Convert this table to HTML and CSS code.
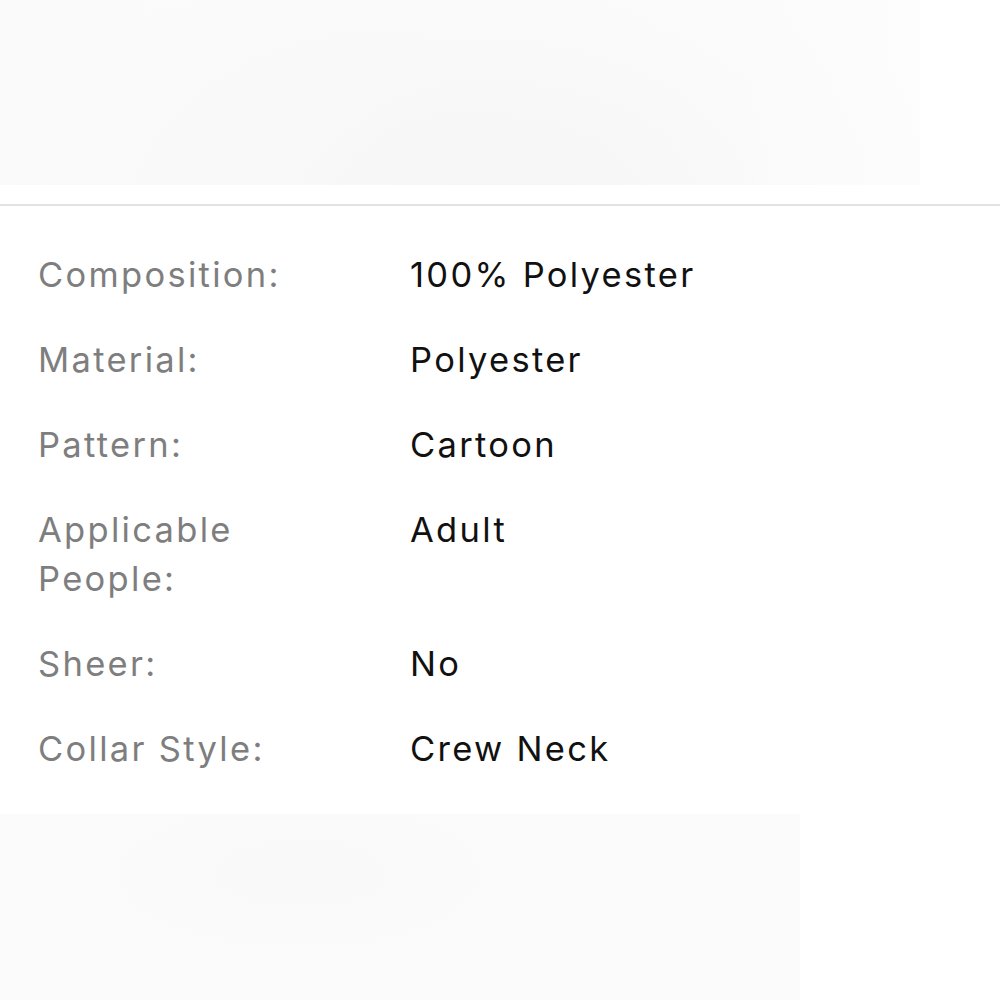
FILE: index.html
```html
<!DOCTYPE html>
<html>
<head>
<meta charset="utf-8">
<link rel="stylesheet" href="styles.css">
</head>
<body>
<div class="photo photo-top"></div>
<div class="divider"></div>
<dl class="specs">
  <div class="row"><dt>Composition:</dt><dd>100% Polyester</dd></div>
  <div class="row"><dt>Material:</dt><dd>Polyester</dd></div>
  <div class="row"><dt>Pattern:</dt><dd>Cartoon</dd></div>
  <div class="row"><dt>Applicable People:</dt><dd>Adult</dd></div>
  <div class="row"><dt>Sheer:</dt><dd>No</dd></div>
  <div class="row"><dt>Collar Style:</dt><dd>Crew Neck</dd></div>
</dl>
<div class="photo photo-bottom"></div>
</body>
</html>
```
FILE: styles.css
```css
html, body {
  margin: 0;
  padding: 0;
  background: #ffffff;
  overflow: hidden;
}
body {
  font-family: Inter, "Noto Sans", sans-serif;
  width: 1000px;
  height: 1000px;
}
.photo-top {
  width: 920px;
  height: 185px;
  background:
    radial-gradient(ellipse 260px 200px at 510px 230px, #f6f6f6 0%, rgba(247,247,247,0) 100%),
    radial-gradient(ellipse 480px 260px at 480px 200px, #f8f8f8 0%, rgba(249,249,249,0) 100%),
    linear-gradient(to right, #fafafa 0%, #fbfbfb 80%, #fdfdfd 100%);
}
.divider {
  margin-top: 19px;
  height: 2px;
  background: #e2e2e2;
}
.specs {
  margin: 0;
  padding: 44px 0 0 38px;
  display: flex;
  flex-direction: column;
  gap: 36px;
  font-size: 34.5px;
  line-height: 49px;
  letter-spacing: 2.3px;
}
.row {
  display: grid;
  grid-template-columns: 372px 1fr;
}
.row dt {
  color: #7e7e7e;
  width: 240px;
}
.row dd {
  margin: 0;
  color: #111111;
}
.photo-bottom {
  margin-top: 41px;
  width: 800px;
  height: 200px;
  background:
    radial-gradient(ellipse 300px 120px at 300px 60px, #f9f9f9 0%, rgba(250,250,250,0) 100%),
    #fbfbfb;
}
```
